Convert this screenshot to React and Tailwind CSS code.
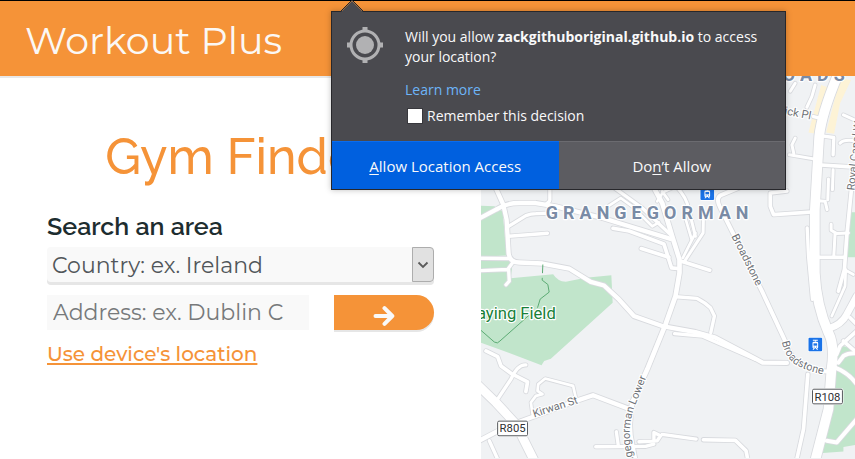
import React from "react";

const brandFont = "font-['Montserrat','Inter',sans-serif]";
const headingFont = "font-['Raleway','Inter',sans-serif]";

// Street network, drawn twice: first the grey casing, then the white surface.
const streets = [
  { w: 13, d: "M55 345 L82 405 L92 450 L98 550 Q100 578 130 579 L200 582 L280 597 L345 637 L385 648 L430 690 L475 740 L560 770 L660 788 L720 805 L840 868 L862 880 L935 881" },
  { w: 13, d: "M0 452 L60 420 Q90 400 130 400 L180 400 L240 410 L380 445 L585 508" },
  { w: 10, d: "M222 340 V385 Q224 396 212 402" },
  { w: 10, d: "M98 470 L150 438 Q165 432 180 432 L230 430" },
  { w: 10, d: "M98 500 L215 491" },
  { w: 11, d: "M0 566 L98 567" },
  { w: 10, d: "M0 604 L95 600 L110 580 M98 600 L100 635 L90 646" },
  { w: 14, d: "M530 345 L560 400 L590 500 L612 570 L612 610 L600 680 L570 765 L515 900 L470 1000 Q455 1070 470 1130 L480 1180" },
  { w: 10, d: "M410 350 L500 415 L590 500" },
  { w: 8, d: "M400 408 L435 385 L470 410 L530 470 L550 458" },
  { w: 8, d: "M545 395 L562 368 L590 355 M560 365 L578 390" },
  { w: 9, d: "M602 350 Q635 385 640 420 L660 500" },
  { w: 8, d: "M625 430 L648 508" },
  { w: 9, d: "M684 440 L683 490 L628 574" },
  { w: 8, d: "M660 490 L622 565" },
  { w: 11, d: "M412 476 L460 484 L565 523 L588 595 L606 597" },
  { w: 11, d: "M497 537 L580 563" },
  { w: 11, d: "M620 576 L703 602" },
  { w: 10, d: "M602 682 L665 687 Q690 700 705 715 L717 740 L706 790" },
  { w: 10, d: "M597 793 L680 800 L840 870" },
  { w: 12, d: "M800 350 L735 377 Q720 388 735 415 L755 455 L860 665 L925 805 L950 860 Q970 885 1030 905 L1060 907" },
  { w: 11, d: "M935 364 L885 370 L885 410 L895 435 L1010 427" },
  { w: 10, d: "M996 475 L1000 560 L1012 690" },
  { w: 9, d: "M960 205 L950 225 L956 252 M942 255 L1020 268" },
  { w: 11, d: "M1025 285 L1140 292" },
  { w: 10, d: "M1040 198 L1076 203 L1074 255" },
  { w: 9, d: "M1060 328 L1058 390 M1074 300 L1072 360 M1025 393 L1050 395 L1056 420" },
  { w: 9, d: "M1068 464 L1068 482 L1085 492 L1120 490 M1080 490 L1076 560" },
  { w: 10, d: "M1020 563 L1108 563" },
  { w: 11, d: "M1130 350 L1115 500 L1108 600 L1090 665" },
  { w: 8, d: "M1108 600 L1135 615 M1112 600 L1110 650 L1070 740" },
  { w: 9, d: "M960 40 L945 64 M1020 45 L1010 80 L995 112" },
  { w: 9, d: "M1105 135 L1145 153 M1095 220 Q1108 207 1145 214" },
  { w: 10, d: "M1015 140 L1040 146" },
  { w: 11, d: "M998 915 L985 1080 L965 1170" },
  { w: 11, d: "M30 845 L65 862 L75 890 L105 912 L155 938 L150 967" },
  { w: 10, d: "M65 990 L105 930 Q125 885 150 887" },
  { w: 13, d: "M0 1120 L90 1073 L180 1040 L310 992 L352 978 L455 1017" },
  { w: 8, d: "M170 1035 L165 1000 L180 980 L200 975 L185 965 L187 945 L208 928 L292 950 L300 985" },
  { w: 10, d: "M40 1115 L65 1170" },
  { w: 10, d: "M360 1133 L510 1132 L535 1125 M422 1088 L428 1130" },
  { w: 10, d: "M490 1118 L545 1115 L555 1100 L535 1090 L535 1112 M560 1096 L662 1110" },
  { w: 11, d: "M684 1112 L780 1114 L812 1145 L818 1175" },
  { w: 26, d: "M0 942 L60 1000 L120 1065 L175 1175" },
  { w: 29, d: "M1086 20 Q1040 130 1032 200 L1019 420 L1019 610 Q1024 710 1060 790 Q1080 830 1069 900 L1060 1020 L1020 1175" },
  { w: 20, d: "M1060 778 Q1100 765 1115 735 L1145 680" },
  { w: 11, d: "M1085 855 L1095 830 L1145 785 M1105 815 L1145 850 M1125 745 L1145 765" },
  { w: 12, d: "M1075 893 Q1120 910 1145 945 M1090 880 L1105 860 Q1120 850 1145 852" },
  { w: 12, d: "M1055 1115 L1085 1120 L1145 1050" },
];

function TramStop({ x, y }) {
  return (
    <g transform={`translate(${x} ${y})`}>
      <rect x="-2" y="-2" width="45" height="45" rx="5" fill="#fff" />
      <rect width="41" height="41" rx="3" fill="#1a73e8" />
      <path d="M13 6H28V9H22L21 12H25Q29 12 29 16V29Q29 32 26 32L29 36H25L22 32H19L16 36H12L15 32Q12 32 12 29V16Q12 12 16 12H19L20 9H13Z" fill="#fff" />
      <rect x="15" y="17" width="11" height="7" fill="#1a73e8" />
      <circle cx="17" cy="28" r="1.6" fill="#1a73e8" />
      <circle cx="24" cy="28" r="1.6" fill="#1a73e8" />
    </g>
  );
}

function RoadShield({ x, y, children }) {
  return (
    <g transform={`translate(${x} ${y})`}>
      <rect x="-2" y="-2" width="96" height="50" rx="6" fill="#fff" />
      <rect x="1" y="1" width="90" height="44" rx="4" fill="#fff" stroke="#55585c" strokeWidth="3" />
      <text x="46" y="35" textAnchor="middle" fontSize="34" fill="#303134" stroke="none">{children}</text>
    </g>
  );
}

function StreetMap() {
  return (
    <svg
      className="block w-full font-['Roboto',sans-serif]"
      viewBox="15 18 1125 1149"
      preserveAspectRatio="xMinYMin slice"
      role="img"
      aria-label="Street map of Grangegorman"
    >
      <defs>
        <path id="broadstone-curve" d="M920 818 Q930 862 958 884 Q990 904 1045 916" />
        <path id="grangegorman-curve" d="M490 1230 Q468 1160 462 1110 Q460 1060 478 1010 L530 880" />
      </defs>
      <g fill="#c1e5cb">
        <path d="M0 408 L55 410 L80 425 L92 558 L0 562Z" />
        <path d="M0 570 L105 570 L108 600 L104 626 L232 614 Q245 635 270 637 L330 625 L407 617 L411 700 L225 868 L205 875 L197 888 L65 838 L0 815Z" />
        <path d="M1128 428H1140V563H1117Z" />
        <path d="M1085 850 L1105 830 L1140 842 V1128 L1105 1134 V1147 L1043 1152 L1058 1020Z" />
      </g>
      <g fill="#fdf3d6">
        <path d="M1038 45 L1066 55 L1022 192 L1000 188Z" />
        <path d="M1095 25 L1128 30 L1095 100 L1077 192 L1053 188Z" />
      </g>
      <g fill="none" strokeLinecap="round" strokeLinejoin="round" stroke="#d8dade">
        {streets.map((s) => <path key={s.d} d={s.d} strokeWidth={s.w + 5} />)}
      </g>
      <g fill="none" strokeLinecap="round" strokeLinejoin="round" stroke="#fff">
        {streets.map((s) => <path key={s.d} d={s.d} strokeWidth={s.w} />)}
      </g>
      <path d="M15 783 L55 818 Q65 825 72 815 L160 737" fill="none" stroke="#5bab73" strokeWidth="3" />
      <path d="M201 585 L199 632 L216 645 L220 668 L193 689 L185 715" fill="none" stroke="#5bab73" strokeWidth="3" strokeDasharray="26 14 200" />
      <g stroke="#fff" strokeWidth="7" strokeLinejoin="round" paintOrder="stroke" fill="#6f7378" fontSize="33">
        <text x="-41" y="748" fontSize="50" fill="#188038">Playing Field</text>
        <g fontSize="54" fontWeight="700" fill="#7a8ba5" className="tracking-[0.28em]">
          <text x="210" y="447">GRANGEGORMAN</text>
          <text x="873" y="33">ROADS</text>
        </g>
        <text transform="translate(768 500) rotate(63.5)">Broadstone</text>
        <text transform="translate(175 1045) rotate(-18)">Kirwan St</text>
        <text transform="translate(894 127) rotate(11)" fontSize="34">Brick Pl</text>
        <text transform="translate(1138 363) rotate(-84)">Royal Canal Way</text>
        <text><textPath href="#broadstone-curve">Broadstone</textPath></text>
        <text><textPath href="#grangegorman-curve">Grangegorman Lower</textPath></text>
      </g>
      <TramStop x={675} y={350} />
      <TramStop x={1000} y={805} />
      <RoadShield x={64} y={1055}>R805</RoadShield>
      <RoadShield x={1011} y={959}>R108</RoadShield>
    </svg>
  );
}

function GymSearch() {
  return (
    <section className="w-9/16 shrink-0 px-[47px] pt-[49px]">
      <h2 className={`text-center text-[50px] leading-16 font-medium text-[#f59338] ${headingFont}`}>Gym Finder</h2>
      <form className={brandFont} onSubmit={(e) => e.preventDefault()}>
        <label htmlFor="country" className={`mt-[19px] block text-[25px] leading-9 font-semibold text-[#1d2d2f] ${headingFont}`}>
          Search an area
        </label>
        <div className="relative mt-[3px]">
          <select id="country" className="block h-[35px] w-full appearance-none rounded-sm bg-[#f9f9f9] pt-px pl-[5px] text-[22px] text-[#51565a] shadow-[0_3px_0_#e6e6e6]">
            <option>Country: ex. Ireland</option>
          </select>
          <span className="pointer-events-none absolute inset-y-0 right-0 flex w-[22px] items-center justify-center rounded-r-sm border border-[#adadad] bg-[#e1e1e1]">
            <svg className="w-3" viewBox="0 0 12 8" fill="none" stroke="#5a5a5a" strokeWidth="1.8"><path d="M1.5 1.5 L6 6 L10.5 1.5" /></svg>
          </span>
        </div>
        <div className="mt-[13px] flex gap-[25px]">
          <input
            type="text"
            aria-label="Address"
            placeholder="Address: ex. Dublin C"
            className="h-[35px] min-w-0 flex-1 bg-[#f9f9f9] pl-1.5 text-[22px] placeholder:text-[#77797b]"
          />
          <button type="submit" aria-label="Search" className="flex h-[35px] w-[100px] items-center justify-center rounded-r-full bg-[#f59338] pt-1.5 shadow-[0_2px_0_#e6e6e6]">
            <svg className="w-[22px]" viewBox="0 0 22 20" fill="none" stroke="#f9f9f9" strokeWidth="4" strokeLinecap="round" strokeLinejoin="round">
              <path d="M2.5 10H18M11.500 2.200L19.300 10L11.500 17.800" />
            </svg>
          </button>
        </div>
        <a href="#location" className="mt-2 inline-block text-xl leading-8 font-medium text-[#f59338] underline underline-offset-2">Use device's location</a>
      </form>
    </section>
  );
}

function PermissionPrompt() {
  return (
    <div
      role="dialog"
      aria-label="Location permission"
      className="absolute top-[11px] left-[331px] w-[455px] border border-[#27272b] bg-[#4a4a4f] font-['Segoe_UI','Open_Sans',sans-serif] text-[14px] leading-5 text-[#f9f9fa] shadow-[0_0_6px_rgba(0,0,0,0.25)]"
    >
      <svg className="absolute -top-3 left-2 h-[13px] w-6" viewBox="0 0 24 13">
        <path d="M0 13L12 1L24 13Z" fill="#4a4a4f" />
        <path d="M0 12L12 0L24 12" fill="none" stroke="#27272b" />
      </svg>
      <div className="flex gap-[22px] px-[15px] pt-[15px] pb-[15px]">
        <svg className="h-9 w-9 shrink-0" viewBox="0 0 36 36">
          <g fill="none" stroke="#b1b1b3">
            <circle cx="18" cy="18" r="14" strokeWidth="3" />
            <path d="M18 0V5M18 31V36M0 18H5M31 18H36" strokeWidth="5" />
          </g>
          <circle cx="18" cy="18" r="9" fill="#b1b1b3" />
        </svg>
        <div>
          <p>Will you allow <strong className="font-bold">zackgithuboriginal.github.io</strong> to access your location?</p>
          <a href="#learn" className="mt-[13px] block text-[#6db5f9]">Learn more</a>
          <label className="mt-1.5 flex items-center gap-1">
            <input type="checkbox" className="ml-[2px] h-4 w-4 appearance-none border border-[#38383d] bg-white" />
            Remember this decision
          </label>
        </div>
      </div>
      <div className="grid grid-cols-2 text-[15px] leading-[46px]">
        <button type="button" className="border-t border-[#0a6cf0] bg-[#0060df] pt-px">
          <u className="underline-offset-2">A</u>llow Location Access
        </button>
        <button type="button" className="border-t border-[#6b6b70] bg-[#5c5c61] pt-px">
          Do<u className="underline-offset-2">n</u>’t Allow
        </button>
      </div>
    </div>
  );
}

export default function App() {
  return (
    <div className="relative flex min-h-screen flex-col overflow-hidden bg-white">
      <header className="border-t border-black bg-[#f59338] px-[25px] pt-4 pb-3 shadow-[0_2px_0_#e8e8e8]">
        <h1 className={`text-[38px] leading-[47px] font-normal text-[#fbf8f5] ${brandFont}`}>Workout Plus</h1>
      </header>
      <main className="flex flex-1">
        <GymSearch />
        <div className="min-w-0 flex-1 overflow-hidden bg-[#f0f2f4]">
          <StreetMap />
        </div>
      </main>
      <PermissionPrompt />
    </div>
  );
}
